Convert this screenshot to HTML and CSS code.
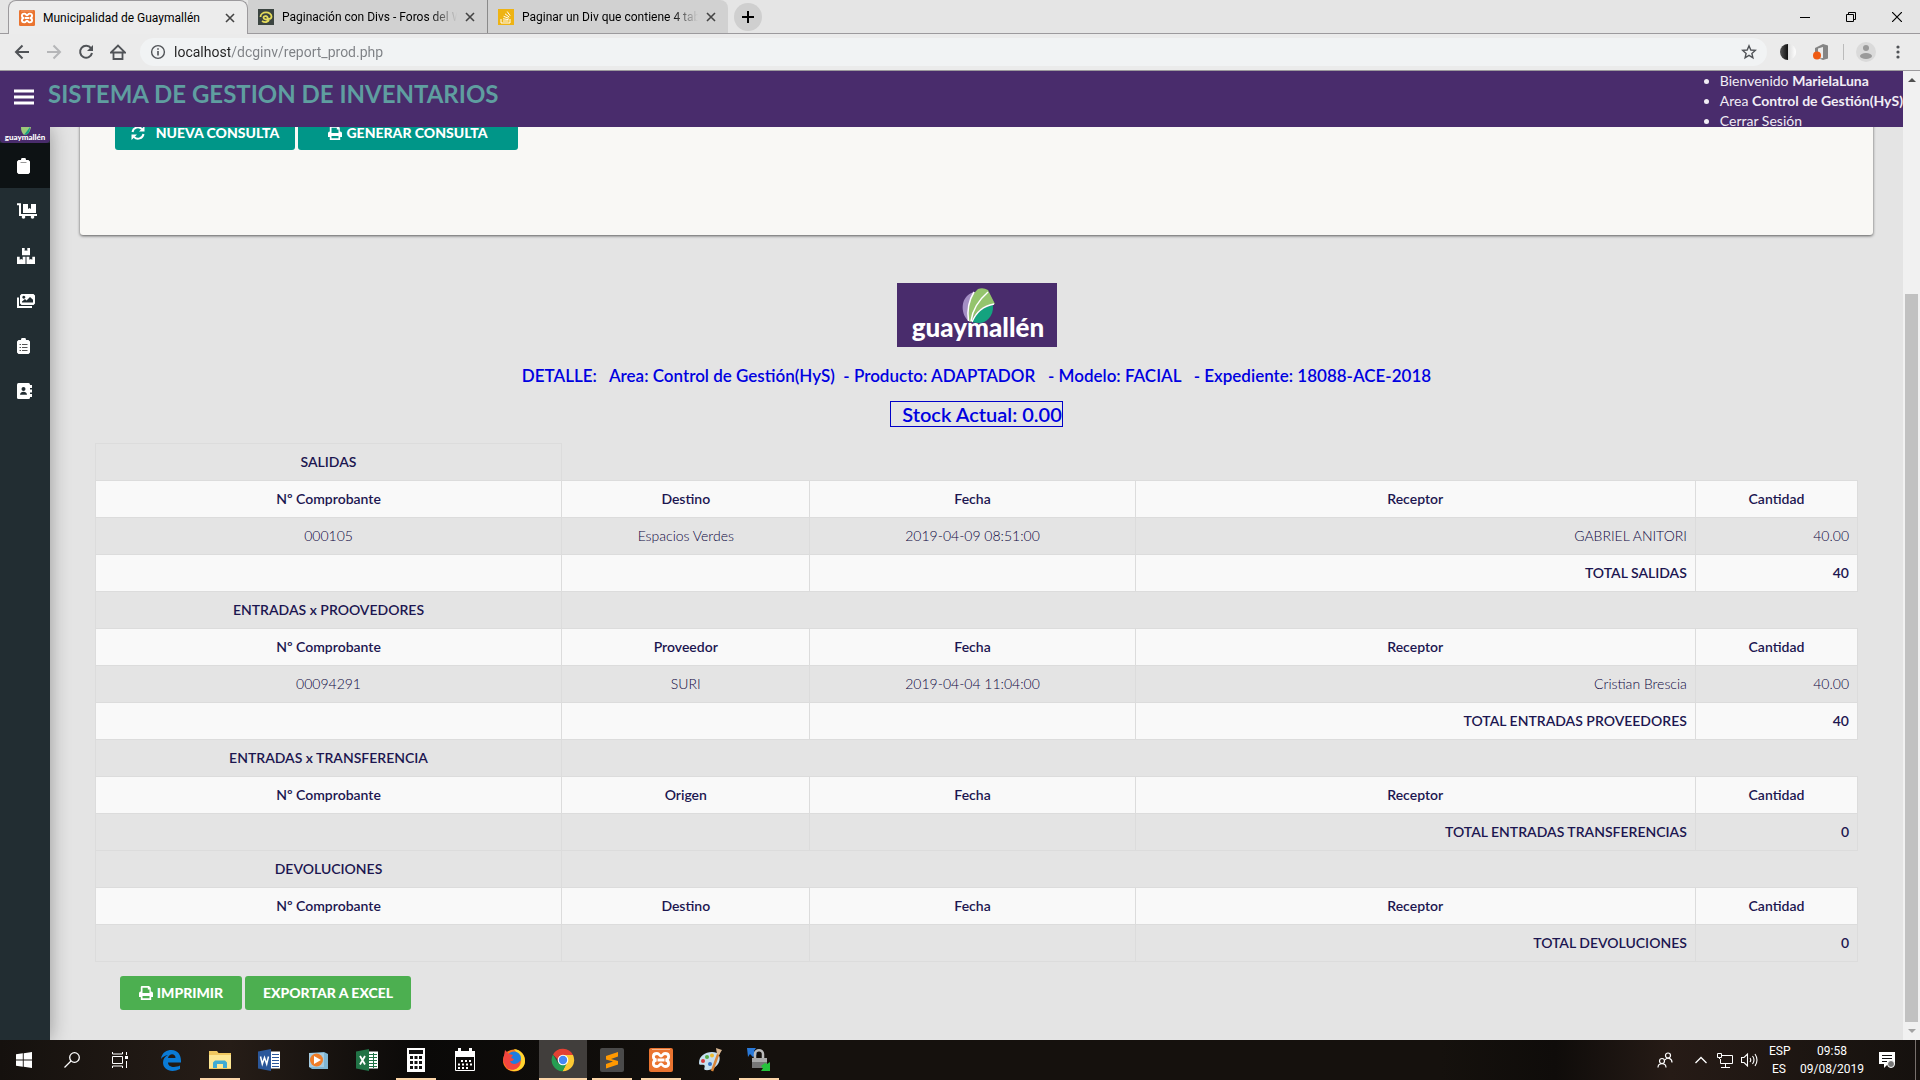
FILE: index.html
```html
<!DOCTYPE html>
<html lang="es">
<head>
<meta charset="utf-8">
<title>Municipalidad de Guaymallén</title>
<link rel="stylesheet" href="styles.css">
</head>
<body>
<svg class="defs" aria-hidden="true">
  <symbol id="close" viewBox="0 0 10 10"><path d="M1 1l8 8M9 1l-8 8" stroke="currentColor" stroke-width="1.6"/></symbol>
  <symbol id="print" viewBox="0 0 14 14"><path fill="currentColor" fill-rule="evenodd" d="M2.500 0h7.500l1.800 1.800V5.500h.4A1.800 1.800 0 0 1 14 7.300V11h-1.800v3H1.800v-3H0V7.300A1.800 1.800 0 0 1 1.800 5.500V.7zM3.500 1.700V7h7V3.500H8.800V1.700zM3.500 10v2.300h7V10z"/></symbol>
  <symbol id="xampp" viewBox="0 0 24 24"><rect width="24" height="24" rx="2" fill="#ea7430"/><path d="M3 1.500h18" stroke="#f7b48a"/><path d="M8 5.500c-5 0-4.500 6-.5 6.500-4 .5-4.500 6.500.5 6.500 2.500 0 2.500-2.500 4-2.500s1.500 2.500 4 2.500c5 0 4.500-6 .5-6.500 4-.5 4.500-6.500-.5-6.500-2.500 0-2.500 2.500-4 2.500S10.500 5.500 8 5.500zM8.500 12h7" fill="none" stroke="#fff" stroke-width="2.800"/></symbol>
</svg>

<div class="tabstrip">
  <div class="tab tab-active">
    <svg class="favicon"><use href="#xampp"/></svg>
    <span class="tab-title">Municipalidad de Guaymallén</span>
    <button class="tab-close" aria-label="Cerrar pestaña"><svg width="10" height="10"><use href="#close"/></svg></button>
  </div>
  <div class="tab">
    <svg class="favicon" viewBox="0 0 16 16"><rect width="16" height="16" fill="#3b4440"/><path d="M4 12c3 2 6 1 7-1M2.500 8c0-6 11-6 11-.5 0 3-4 3-4 1 0-2-4-2-4 .2 0 2 4 1.800 5 1.800" fill="none" stroke="#e5dc5c" stroke-width="1.800"/></svg>
    <span class="tab-title tab-fade">Paginación con Divs - Foros del W</span>
    <button class="tab-close" aria-label="Cerrar pestaña"><svg width="10" height="10"><use href="#close"/></svg></button>
  </div>
  <div class="tab tab-last">
    <svg class="favicon" viewBox="0 0 16 16"><rect width="16" height="16" fill="#eeb313"/><path d="M3 10v4h9v-4M5 12h5.500M5 9.800l5.500.8M5.600 7.300l5.200 2M7 4.800l4.300 3.400M9.200 2.500l3 4.300" fill="none" stroke="#fff"/></svg>
    <span class="tab-title tab-fade">Paginar un Div que contiene 4 tab</span>
    <button class="tab-close" aria-label="Cerrar pestaña"><svg width="10" height="10"><use href="#close"/></svg></button>
  </div>
  <button class="new-tab" aria-label="Nueva pestaña"><svg width="12" height="12"><path d="M6 0v12M0 6h12" stroke="#000" stroke-width="2"/></svg></button>
  <div class="window-controls">
    <button aria-label="Minimizar"><svg width="10" height="10"><path d="M0 5.500h10" stroke="#000"/></svg></button>
    <button aria-label="Restaurar"><svg width="10" height="10"><path d="M.5 2.500h7v7h-7zM2.500 2.500v-2h7v7h-2" fill="none" stroke="#000"/></svg></button>
    <button aria-label="Cerrar"><svg width="10" height="10"><path d="M0 0l10 10M10 0L0 10" stroke="#000" stroke-width="1.200"/></svg></button>
  </div>
</div>

<div class="toolbar">
  <button class="nav-btn" aria-label="Atrás"><svg width="16" height="16"><path d="M15 8H2M8.500 1.500L2 8l6.500 6.500" fill="none" stroke="#505357" stroke-width="2"/></svg></button>
  <button class="nav-btn" aria-label="Adelante"><svg width="16" height="16"><path d="M1 8h13M7.500 1.500L14 8l-6.500 6.500" fill="none" stroke="#b5b6b8" stroke-width="2"/></svg></button>
  <button class="nav-btn" aria-label="Recargar"><svg width="16" height="16"><path d="M13 4.200A6 6 0 1 0 14 9" fill="none" stroke="#505357" stroke-width="2"/><path d="M15 1v6H9z" fill="#505357"/></svg></button>
  <button class="nav-btn" aria-label="Inicio"><svg width="16" height="16"><path d="M3.500 7.500V15h9V7.500M1 8.500l7-7 7 7z" fill="none" stroke="#505357" stroke-width="1.800"/></svg></button>
  <div class="omnibox">
    <svg width="16" height="16"><circle cx="8" cy="8" r="6.400" fill="none" stroke="#505357" stroke-width="1.400"/><path d="M8 7v4.500M8 4.200v1.600" stroke="#505357" stroke-width="1.600"/></svg>
    <input class="url" type="text" aria-label="Dirección" value="localhost/dcginv/report_prod.php">
    <svg width="16" height="16"><path d="M8 1.800l1.800 4.200 4.500.4-3.400 3 1 4.400L8 11.400l-3.900 2.400 1-4.400-3.400-3 4.500-.4z" fill="none" stroke="#505357" stroke-width="1.400"/></svg>
  </div>
  <div class="extensions">
    <svg width="16" height="16"><defs><linearGradient id="moon"><stop offset="0" stop-color="#555"/><stop offset=".5" stop-color="#111"/><stop offset=".51" stop-color="#ddd"/><stop offset="1" stop-color="#fff"/></linearGradient></defs><circle cx="8" cy="8" r="8" fill="url(#moon)"/></svg>
    <svg width="16" height="16"><path d="M2 4l8-4 5 1.500v13L10 16l-4-1.500 4-.5V3L5 4.500V10H2z" fill="#858585"/><circle cx="4" cy="11.500" r="4" fill="#ef5a12"/></svg>
  </div>
  <div class="profile">
    <svg width="20" height="20"><circle cx="10" cy="10" r="10" fill="#dadada"/><circle cx="10" cy="6" r="3" fill="#9a9a9a"/><ellipse cx="10" cy="14" rx="6" ry="3" fill="#9a9a9a"/></svg>
    <button class="menu-btn" aria-label="Menú"><svg width="4" height="14"><g fill="#505357"><circle cx="2" cy="2" r="1.600"/><circle cx="2" cy="7" r="1.600"/><circle cx="2" cy="12" r="1.600"/></g></svg></button>
  </div>
</div>

<div class="viewport">
  <div class="page">
    <header class="app-header">
      <button class="burger" aria-label="Menú principal"><svg width="20" height="16"><path d="M0 2h20M0 8h20M0 14h20" stroke="#fff" stroke-width="3"/></svg></button>
      <h1 class="app-title">SISTEMA DE GESTION DE INVENTARIOS</h1>
      <ul class="user-info">
        <li>Bienvenido <b>MarielaLuna</b></li>
        <li>Area <b>Control de Gestión(HyS)</b></li>
        <li><a href="#salir">Cerrar Sesión</a></li>
      </ul>
    </header>
    <div class="app-body">
      <nav class="sidebar">
        <svg class="side-logo" viewBox="0 0 50 16"><path d="M21 0h10c-1 5-3 8-7 8-2-2-3-4-3-8z" fill="#9cc979"/><path d="M30 0c0 5-2 8-6 8z" fill="#16a085"/><text x="25" y="13" text-anchor="middle" class="side-logo-text">guaymallén</text></svg>
        <a class="side-link side-active" href="#productos" aria-label="Productos"><svg width="13" height="16"><path d="M1.500 2H4a2.500 2.500 0 0 1 5 0h2.500L13 3.500v11L11.500 16h-10L0 14.500v-11z" fill="#fff"/><path d="M3.500 4.500h6" stroke="#999"/></svg></a>
        <a class="side-link" href="#salidas" aria-label="Salidas"><svg width="20" height="16"><path d="M0 1.200h3V12h17" fill="none" stroke="#fff" stroke-width="2"/><path d="M6 1h5v5l1.500-1L14 6V1h5v9H6z" fill="#fff"/><circle cx="6.500" cy="14" r="1.800" fill="#fff"/><circle cx="15.500" cy="14" r="1.800" fill="#fff"/></svg></a>
        <a class="side-link" href="#stock" aria-label="Stock"><svg width="18" height="16"><path d="M5 0h2.700v3L9 2.200l1.300.8V0H13v7.200H5zM0 8.800h2.700v3l1.500-.8 1.500.8v-3h2.800V16H0zM9.500 8.800h2.800v3l1.500-.8 1.500.8v-3H18V16H9.500z" fill="#fff"/></svg></a>
        <a class="side-link" href="#imagenes" aria-label="Imágenes"><svg width="18" height="16"><path fill-rule="evenodd" d="M4.500 1h12L18 2.500v8L16.500 12h-12L3 10.500v-8zM5 9.500h11V6.800L13 4 9.500 7.500 8 6 5 8.500zM6.800 2.800a1.500 1.500 0 1 0 .01 0z" fill="#fff"/><path d="M1 4.500v9.500h14" fill="none" stroke="#fff" stroke-width="2"/></svg></a>
        <a class="side-link" href="#reportes" aria-label="Reportes"><svg width="13" height="16"><path d="M1.500 2H4a2.500 2.500 0 0 1 5 0h2.500L13 3.500v11L11.500 16h-10L0 14.500v-11z" fill="#fff"/><path d="M2.500 6.500H4m1 0h5.500M2.500 9.500H4m1 0h5.500M2.500 12.500H4m1 0h5.500" stroke="#555"/></svg></a>
        <a class="side-link" href="#contactos" aria-label="Contactos"><svg width="15" height="16"><rect width="13" height="16" rx="1.500" fill="#fff"/><path d="M14 2v3m0 1.500v3m0 1.500v3" stroke="#fff" stroke-width="2"/><circle cx="6.500" cy="6" r="2" fill="#222d32"/><path d="M3 11.800c0-4 7-4 7 0z" fill="#222d32"/></svg></a>
      </nav>
      <main class="content">
        <section class="query-panel">
          <button class="btn btn-teal btn-refresh"><svg width="14" height="14"><path d="M1.500 6a5.500 5.500 0 0 1 9.500-2.800M12.500 8A5.500 5.500 0 0 1 3 10.800" fill="none" stroke="#fff" stroke-width="2"/><path d="M13.500 0v5.500H8zM.5 14V8.500H6z" fill="#fff"/></svg>NUEVA CONSULTA</button>
          <button class="btn btn-teal btn-generate"><svg width="14" height="14"><use href="#print"/></svg>GENERAR CONSULTA</button>
        </section>
        <section class="report">
          <svg class="logo" width="160" height="64" viewBox="0 0 160 64">
            <rect width="160" height="64" fill="#492c6c"/>
            <path d="M73 39C65 34 63 20 70 13q4-4 9-4-5 14-5 30z" fill="#a48fc4"/>
            <path d="M72 38C70 22 75 11 81 6q5-2 10 1l7 14C86 22 78 29 74 39z" fill="#94c46d"/>
            <path d="M75 39c3-9 11-15 21-17 1 13-9 19-15 18z" fill="#14a37f"/>
            <path d="M71.500 38Q69 22 77 9M74 38Q76 22 91 9M75 39q6-15 22-18" fill="none" stroke="#fff" stroke-width="1.500"/>
            <text x="81" y="54" text-anchor="middle" class="logo-text">guaymallén</text>
          </svg>
          <h2 class="detail">DETALLE: &nbsp; Area: Control de Gestión(HyS) &nbsp;- Producto: ADAPTADOR &nbsp; - Modelo: FACIAL &nbsp; - Expediente: 18088-ACE-2018</h2>
          <div class="stock">Stock Actual: 0.00</div>
          <table class="moves">
            <colgroup><col class="c-num"><col class="c-place"><col class="c-date"><col class="c-person"><col class="c-qty"></colgroup>
            <tbody>
              <tr><th>SALIDAS</th></tr>
              <tr><th>Nº Comprobante</th><th>Destino</th><th>Fecha</th><th>Receptor</th><th>Cantidad</th></tr>
              <tr><td>000105</td><td>Espacios Verdes</td><td>2019-04-09 08:51:00</td><td class="num">GABRIEL ANITORI</td><td class="num">40.00</td></tr>
              <tr><td></td><td></td><td></td><th class="num">TOTAL SALIDAS</th><th class="num">40</th></tr>
            </tbody>
            <tbody>
              <tr><th>ENTRADAS x PROOVEDORES</th></tr>
              <tr><th>Nº Comprobante</th><th>Proveedor</th><th>Fecha</th><th>Receptor</th><th>Cantidad</th></tr>
              <tr><td>00094291</td><td>SURI</td><td>2019-04-04 11:04:00</td><td class="num">Cristian Brescia</td><td class="num">40.00</td></tr>
              <tr><td></td><td></td><td></td><th class="num">TOTAL ENTRADAS PROVEEDORES</th><th class="num">40</th></tr>
            </tbody>
            <tbody>
              <tr><th>ENTRADAS x TRANSFERENCIA</th></tr>
              <tr><th>Nº Comprobante</th><th>Origen</th><th>Fecha</th><th>Receptor</th><th>Cantidad</th></tr>
              <tr><td></td><td></td><td></td><th class="num">TOTAL ENTRADAS TRANSFERENCIAS</th><th class="num">0</th></tr>
            </tbody>
            <tbody>
              <tr><th>DEVOLUCIONES</th></tr>
              <tr><th>Nº Comprobante</th><th>Destino</th><th>Fecha</th><th>Receptor</th><th>Cantidad</th></tr>
              <tr><td></td><td></td><td></td><th class="num">TOTAL DEVOLUCIONES</th><th class="num">0</th></tr>
            </tbody>
          </table>
          <div class="actions">
            <button class="btn btn-green btn-print"><svg width="14" height="14"><use href="#print"/></svg>IMPRIMIR</button>
            <button class="btn btn-green btn-excel">EXPORTAR A EXCEL</button>
          </div>
        </section>
      </main>
    </div>
  </div>
  <div class="scrollbar">
    <svg width="8" height="4"><path d="M0 4l4-4 4 4z" fill="#505050"/></svg>
    <div class="track"><div class="thumb"></div></div>
    <svg width="8" height="4"><path d="M0 0l4 4 4-4z" fill="#a3a3a3"/></svg>
  </div>
</div>

<footer class="taskbar">
  <div class="task-system">
    <button class="task" aria-label="Inicio"><svg width="16" height="16"><path d="M0 2.300L6.800 1.300v6.200H0zM7.700 1.200L16 0v7.500H7.700zM0 8.400h6.800v6.300L0 13.700zM7.700 8.400H16V16l-8.300-1.200z" fill="#fff"/></svg></button>
    <button class="task" aria-label="Buscar"><svg width="16" height="16"><circle cx="10.500" cy="5.500" r="4.800" fill="none" stroke="#fff" stroke-width="1.300"/><path d="M7 9l-6.500 6.500" stroke="#fff" stroke-width="1.300"/></svg></button>
    <button class="task" aria-label="Vista de tareas"><svg width="18" height="16"><path d="M1.500 4.500h10v7h-10zM1.500 0v2h10V0M1.500 16v-2h10v2M15.500 0v3M15.500 9v7" fill="none" stroke="#fff"/><path d="M14 4h3v3h-3z" fill="#fff"/></svg></button>
  </div>
  <div class="task-apps">
    <button class="task" aria-label="Edge"><svg width="22" height="22"><path d="M1 10C2 3 7 1 11.500 1 18 1 21 6 21 12v1.500H8c0 5 7 5.500 12 3V20C11 24.500 3 20.500 3 13.500 3 10 5 7.500 8 6 5 6.500 2.500 8 1 10zm7-1h7.500c0-5-6.500-5-7.500 0z" fill="#0a7bd6"/></svg></button>
    <button class="task open" aria-label="Explorador"><svg width="22" height="18"><path d="M0 0h8l1.500 2H22v16H0z" fill="#f0c860"/><path d="M0 4h22v13H0z" fill="#fde794"/><path d="M4 17v-5.500L6 9.500h10l2 2V17h-4v-4H8v4z" fill="#3fabd3"/></svg></button>
    <button class="task" aria-label="Word"><svg width="22" height="22"><path d="M12 2.500h10v17H12z" fill="#fff"/><path d="M14 5.500h7M14 8.500h7M14 11.500h7M14 14.500h7M14 17.500h7" stroke="#2b579a"/><path d="M0 2.500L13 0v22L0 19.500z" fill="#2b579a"/><path d="M2.500 7.500l1.800 7.500L6.500 8.500 8.700 15l1.800-7.500" fill="none" stroke="#fff" stroke-width="1.500"/></svg></button>
    <button class="task" aria-label="Reproductor multimedia"><svg width="20" height="18"><path d="M1 2l15-1 4 2v15H4l-3-2z" fill="#7fb6d4"/><path d="M1 2h15v14H1z" fill="#a5cbe0"/><circle cx="8.500" cy="9" r="6.500" fill="#ef7d28"/><path d="M6 5l7 4-7 4z" fill="#fff"/></svg></button>
    <button class="task" aria-label="Excel"><svg width="22" height="22"><path d="M12 2.500h10v17H12z" fill="#fff"/><path d="M13 5.500h8M13 8.500h8M13 11.500h8M13 14.500h8M13 17.500h8M17.500 4v15" stroke="#217346"/><path d="M0 2.500L13 0v22L0 19.500z" fill="#217346"/><path d="M4 7l5 8.500M9 7l-5 8.500" stroke="#fff" stroke-width="1.800"/></svg></button>
    <button class="task open" aria-label="Calculadora"><svg width="18" height="24"><path d="M0 0h18v24H0z" fill="#fff"/><path d="M2 2h14v4H2z" fill="#111"/><path d="M3 9.500h12M3 14.500h12M3 19.500h12" stroke="#111" stroke-width="3" stroke-dasharray="3 1.500"/></svg></button>
    <button class="task" aria-label="Calendario"><svg width="20" height="24"><path d="M.5 8.500h19v14H.5z" fill="none" stroke="#fff"/><path d="M0 3h3V0h3v3h8V0h3v3h3v6H0z" fill="#fff"/><path d="M6 13h11M3 16.500h14M3 20h11" stroke="#fff" stroke-width="2" stroke-dasharray="2 2"/></svg></button>
    <button class="task" aria-label="Firefox"><svg width="24" height="24"><circle cx="12" cy="12.500" r="11" fill="#ff7a1c"/><path d="M12 1c8 1 11 7 11 12 0 8-9 13-17 8 10 2 14-4 13-10z" fill="#ffd52e"/><circle cx="12" cy="10.500" r="7" fill="#1e7de0"/><path d="M1 13L3 2l4 4 4 1-2 3 3 1c-1 3-4 2-4 2 1 4 7 4 10 0 1 8-8 11-13 7z" fill="#f2453f"/></svg></button>
    <button class="task open active" aria-label="Chrome"><svg width="24" height="24"><path d="M2 6.500A11.300 11.300 0 0 1 22 7H12l-5 5z" fill="#e34133"/><path d="M22 7a11.300 11.300 0 0 1-10.500 16.300L17 12l-4-5z" fill="#fcc934"/><path d="M2 6.500A11.300 11.300 0 0 0 11.500 23.300L16 15l-9 0z" fill="#269d52"/><circle cx="12" cy="12" r="5.300" fill="#fff"/><circle cx="12" cy="12" r="4.200" fill="#4688f4"/></svg></button>
    <button class="task open" aria-label="Sublime Text"><svg width="24" height="24"><rect width="24" height="24" rx="2" fill="#4a4a4a"/><path d="M6 8l12-4v4.500L11 11l7 2v3.500L6 20.500V16l7-2.500-7-2z" fill="#ff9800"/></svg></button>
    <button class="task open" aria-label="XAMPP"><svg width="24" height="24"><use href="#xampp"/></svg></button>
    <button class="task" aria-label="Paint"><svg width="24" height="24"><path d="M1 15C1 8 7 4 14 4c7 0 9 5 7 10s-8 9-14 8c-2-1 1-4-1-5s-5 1-5-2z" fill="#c5dff0"/><circle cx="5" cy="13" r="2" fill="#d83b3b"/><circle cx="9" cy="9" r="2" fill="#55ad48"/><circle cx="14" cy="7.500" r="2" fill="#edbc32"/><circle cx="12" cy="16" r="2" fill="#3572c8"/><path d="M21 4l-7 19" stroke="#d98538" stroke-width="2.500"/><path d="M18 0l6 2-3 5-2-1z" fill="#dab893"/></svg></button>
    <button class="task open" aria-label="WinSCP"><svg width="24" height="24"><path d="M0 0h9L7 3l3 3-4 3-3-3-2 3z" fill="#2979d8"/><path d="M8 10V6c0-5 8-5 8 0v4" fill="none" stroke="#bbb" stroke-width="2.500"/><path d="M5 10h15v10H5z" fill="#777"/><path d="M5 10h15v4H5z" fill="#aaa"/><path d="M23 14v9h-9l2-3-2-2 4-3 2 1z" fill="#25c33b"/></svg></button>
  </div>
  <div class="tray">
    <svg class="people" width="16" height="16"><g fill="none" stroke="#fff" stroke-width="1.200"><circle cx="5" cy="9" r="2.500"/><circle cx="11" cy="3.500" r="2.500"/><path d="M1 15.500c0-5 8-5 8 0M8 8c2-3 7-2 7 2.500"/></g></svg>
    <svg class="chevron" width="12" height="8"><path d="M.5 7L6 1.500 11.500 7" fill="none" stroke="#fff" stroke-width="1.300"/></svg>
    <svg width="16" height="16"><path d="M4 3.500h11.500v8H3.500V7M8.500 12v3M4 15.500h9M.5 1.500h4v4h-4zM2.500 5.500V7" fill="none" stroke="#fff"/></svg>
    <svg class="volume" width="17" height="16"><path d="M.5 5.500H3L6.500 2v12L3 10.500H.5zM9 6q1.500 2 0 4M11.500 4q3 4 0 8M14 2q4 6 0 12" fill="none" stroke="#fff" stroke-width="1.100"/></svg>
    <div class="tray-text lang">ESP<br>ES</div>
    <div class="tray-text clock">09:58<br>09/08/2019</div>
    <svg class="notes" width="17" height="17"><path d="M0 0h16v12H9l-4 4v-4H0z" fill="#fff"/><path d="M3 3.500h10M3 6.500h10M3 9.500h5" stroke="#111"/><circle cx="12" cy="12" r="3.500" fill="#777" stroke="#fff"/></svg>
  </div>
</footer>
</body>
</html>
```
FILE: styles.css
```css
* { box-sizing: border-box; }

body {
  margin: 0;
  height: 100vh;
  display: flex;
  flex-direction: column;
  overflow: hidden;
  font-family: Lato, sans-serif;
  font-size: 14px;
  line-height: 20px;
  background: #e4e4e4;
}

button {
  padding: 0;
  border: 0;
  background: none;
  font: inherit;
  color: inherit;
}

svg { display: block; flex: none; }
.defs { position: absolute; width: 0; height: 0; }

/* Browser tabs */
.tabstrip {
  flex: none;
  display: flex;
  align-items: center;
  height: 34px;
  padding-left: 8px;
  background: #e5e5e5;
  border-bottom: 1px solid #9c9a9d;
  font: 12px/16px Roboto, sans-serif;
}
.tab {
  display: flex;
  align-items: center;
  gap: 8px;
  width: 240px;
  height: 33px;
  padding: 0 12px 0 10px;
  background: #d1d1d1;
  border-right: 1px solid #8a8a8a;
}
.tab-active {
  height: 34px;
  margin-bottom: -1px;
  background: #ececec;
  border: 1px solid #9c9a9d;
  border-bottom: 0;
  border-radius: 8px 8px 0 0;
}
.tab-last { border-right: 0; border-radius: 0 8px 0 0; }
.favicon { width: 16px; height: 16px; }
.tab-title { flex: 1; overflow: hidden; white-space: nowrap; }
.tab-fade {
  -webkit-mask-image: linear-gradient(90deg, #000 85%, transparent);
  mask-image: linear-gradient(90deg, #000 85%, transparent);
}
.tab-close { width: 10px; color: #444; }
.new-tab {
  display: flex;
  align-items: center;
  justify-content: center;
  width: 28px;
  height: 28px;
  margin-left: 6px;
  border-radius: 50%;
  background: #cfcfcf;
}
.window-controls { display: flex; margin-left: auto; height: 28px; }
.window-controls button {
  display: flex;
  align-items: center;
  justify-content: center;
  width: 46px;
}

/* Browser toolbar */
.toolbar {
  flex: none;
  display: flex;
  align-items: center;
  height: 37px;
  padding: 0 20px 0 6px;
  background: #ebebeb;
  border-bottom: 1px solid #9c9a9d;
}
.nav-btn { display: flex; justify-content: center; width: 32px; }
.omnibox {
  flex: 1;
  display: flex;
  align-items: center;
  gap: 8px;
  height: 28px;
  margin-left: 6px;
  padding: 0 10px;
  border-radius: 14px;
  background: #f1f3f4;
}
.url {
  flex: 1;
  padding: 0;
  border: 0;
  outline: 0;
  font: 14px/20px Roboto, sans-serif;
  color: transparent;
  background: linear-gradient(90deg, #222 56px, #7d8084 56px) text;
}
.extensions {
  display: flex;
  gap: 17px;
  margin-left: 13px;
  padding-right: 14px;
  border-right: 1px solid #bbb;
}
.profile { display: flex; align-items: center; gap: 20px; margin-left: 12px; }

/* Page viewport */
.viewport { flex: 1; min-height: 0; display: flex; }
.page { flex: 1; min-width: 0; display: flex; flex-direction: column; }

.app-header {
  flex: none;
  display: flex;
  align-items: center;
  height: 56px;
  padding-left: 14px;
  overflow: hidden;
  background: #492c6c;
  color: #f1edf5;
}
.burger { margin: 0 14px 4px 0; }
.app-title {
  margin: 0 0 10px;
  font-size: 24px;
  line-height: 28px;
  font-weight: 700;
  color: #5f9ea0;
}
.user-info { align-self: flex-start; margin: 0 0 0 auto; padding: 0; white-space: nowrap; }
.user-info a { color: inherit; text-decoration: none; }

.app-body { flex: 1; min-height: 0; display: flex; overflow: hidden; }
.sidebar {
  flex: none;
  width: 50px;
  background: #222d32;
  box-shadow: 0 0 20px rgba(0, 0, 0, 0.35);
}
.side-logo { width: 50px; height: 16px; background: #492c6c; border-radius: 0 0 4px 4px; }
.side-logo-text { font: 900 8px Lato, sans-serif; fill: #fff; }
.side-link { display: flex; align-items: center; height: 45px; padding-left: 17px; }
.side-active { background: #0d1214; }

.content { flex: 1; min-width: 0; }
.query-panel {
  display: flex;
  align-items: flex-start;
  gap: 3px;
  height: 148px;
  margin: -40px 30px 0;
  padding: 29px 35px;
  border-radius: 3px;
  background: #f9f8f5;
  box-shadow: 0 1px 3px rgba(0, 0, 0, 0.6);
}

.btn {
  display: flex;
  align-items: center;
  justify-content: center;
  gap: 4px;
  height: 34px;
  border-radius: 3px;
  font-weight: 900;
  color: #fff;
}
.btn-teal { background: #009688; }
.btn-green { background: #4caf50; }
.btn-refresh { gap: 11px; width: 180px; }
.btn-generate { width: 220px; }
.btn-print { width: 122px; }
.btn-excel { width: 166px; }

/* Report */
.report {
  display: flex;
  flex-direction: column;
  align-items: center;
  padding: 48px 45px 0;
}
.logo-text { font: 900 26px Lato, sans-serif; fill: #fff; }
.detail {
  margin: 18px 0 14px;
  font-size: 17px;
  line-height: 22px;
  font-weight: 600;
  color: #0000e0;
}
.stock {
  padding-left: 11px;
  border: 1px solid #0000c8;
  font-size: 20px;
  line-height: 24px;
  font-weight: 600;
  color: #0000e0;
}
.moves {
  width: 100%;
  margin-top: 16px;
  table-layout: fixed;
  border-collapse: collapse;
  color: #1c1650;
}
.c-num { width: 26.45%; }
.c-place { width: 14.1%; }
.c-date { width: 18.45%; }
.c-person { width: 31.8%; }
.c-qty { width: 9.2%; }
.moves tr { height: 37px; }
.moves tr:nth-child(even) { background: #f9f9f9; }
.moves th, .moves td { padding: 8px; border: 1px solid #dcdcdc; text-align: center; }
.moves th { font-weight: 600; }
.moves td { font-weight: 300; color: #0c0440; }
.moves .num { text-align: right; }
.actions { align-self: flex-start; display: flex; gap: 3px; margin: 14px 25px 0; }

/* Page scrollbar */
.scrollbar {
  flex: none;
  display: flex;
  flex-direction: column;
  align-items: center;
  gap: 7px;
  width: 17px;
  padding: 7px 0;
  background: #f1f1f1;
}
.track { flex: 1; display: flex; align-items: flex-end; }
.thumb { width: 13px; height: 78%; background: #c1c1c1; }

/* Desktop taskbar */
.taskbar {
  flex: none;
  display: flex;
  height: 40px;
  background: linear-gradient(90deg, #15110e, #261d17 12%, #0a0908 22%, #15110d 40%, #15110d 75%, #0f0c0a 81%, #261b16 87%, #15110e);
  color: #fff;
}
.task-system { display: flex; }
.task-apps { display: flex; gap: 1px; margin-left: 3px; }
.task {
  display: flex;
  align-items: center;
  justify-content: center;
  width: 48px;
  height: 40px;
}
.open {
  background: linear-gradient(#fbd5a8, #fbd5a8) bottom / 40px 2px no-repeat;
}
.active {
  background: linear-gradient(#fbd5a8, #fbd5a8) bottom / 48px 2px no-repeat #413e3c;
}
.tray {
  display: flex;
  align-items: center;
  margin-left: auto;
  margin-right: 4px;
  padding-right: 19px;
  border-right: 1px solid #77706c;
}
.people { margin-right: 22px; }
.chevron { margin-right: 10px; }
.volume { margin: 0 11px 0 8px; }
.tray-text { font: 12px/18px Roboto, sans-serif; text-align: center; }
.lang { width: 20px; }
.clock { width: 64px; margin: 0 15px 0 11px; }
```
